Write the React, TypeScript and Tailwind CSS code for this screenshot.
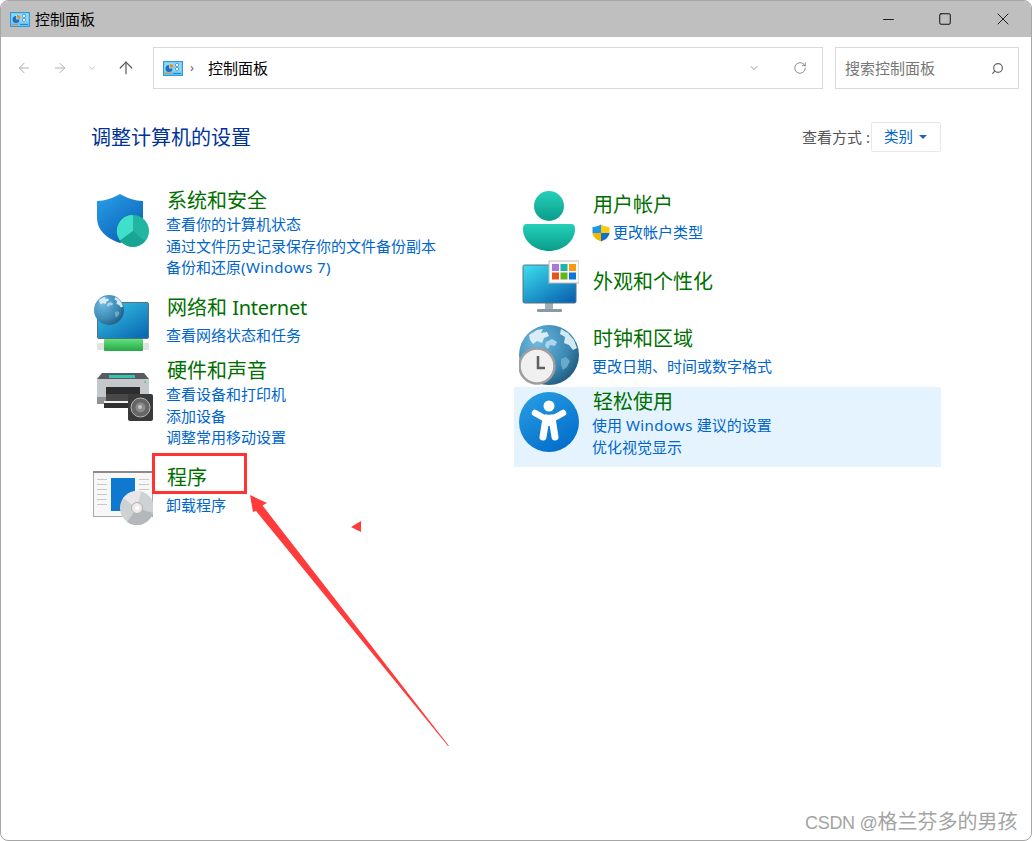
import type { ReactNode } from 'react'
import { ArrowLeft, ArrowRight, ArrowUp, ChevronDown, RotateCw, Search, X, Minus, Square } from 'lucide-react'

const FONT = "font-['Noto_Sans','Noto_Sans_CJK_SC',sans-serif]"

function CpIcon() {
  return (
    <svg width="20" height="15" viewBox="0 0 20 15">
      <rect x="0.5" y="0.5" width="19" height="14" fill="#6cc4ef" stroke="#2f9ad8" />
      <rect x="1.5" y="1.5" width="17" height="9" fill="#8ed6f6" />
      <path d="M6 4 A3.5 3.5 0 1 0 9.5 7.5 L6 7.5 Z" fill="#1f6fc0" />
      <path d="M7 3 A3.5 3.5 0 0 1 10.5 6.5 L7 6.5 Z" fill="#f08a1d" />
      <circle cx="14" cy="4" r="1.6" fill="#fff" stroke="#2a7fc4" strokeWidth="0.7" />
      <circle cx="14" cy="8" r="1.6" fill="#fff" stroke="#2a7fc4" strokeWidth="0.7" />
      <rect x="2" y="12" width="6" height="1" fill="#f08a1d" />
      <rect x="10" y="12" width="8" height="1" fill="#1f8ad0" />
    </svg>
  )
}

function ShieldIcon() {
  return (
    <svg width="60" height="60" viewBox="0 0 60 60">
      <defs>
        <linearGradient id="sh" x1="0" y1="0" x2="0.7" y2="1">
          <stop offset="0" stopColor="#2aa0e8" />
          <stop offset="1" stopColor="#0a62b8" />
        </linearGradient>
      </defs>
      <path d="M4 11 C12 11 20 8 27 4 C34 8 42 11 50 11 V28 C50 40 40 49 27 53 C14 49 4 40 4 28 Z" fill="url(#sh)" />
      <circle cx="40" cy="41" r="16" fill="#21b5a2" />
      <path d="M40 41 V25 A16 16 0 0 0 27 50.5 Z" fill="#3fe0cb" />
      <path d="M40 41 L27 50.5 A16 16 0 0 0 52 51 Z" fill="#18a593" />
    </svg>
  )
}

function Globe({ cx, cy, r, id }: { cx: number; cy: number; r: number; id: string }) {
  const k = r / 30
  return (
    <g transform={`translate(${cx} ${cy}) scale(${k})`}>
      <defs>
        <radialGradient id={id} cx="0.3" cy="0.3" r="0.95">
          <stop offset="0" stopColor="#6fb9de" />
          <stop offset="0.55" stopColor="#3a88b4" />
          <stop offset="1" stopColor="#123f5c" />
        </radialGradient>
      </defs>
      <circle r="30" fill={`url(#${id})`} />
      <path d="M-20 -20 L-12 -25 L-6 -26 L-8 -22 L-2 -23 L0 -19 L-5 -17 L-7 -12 L-12 -14 L-16 -11 L-19 -15 Z" fill="#d8edf6" />
      <path d="M-3 -13 L3 -16 L8 -13 L6 -9 L1 -10 L-1 -6 L-4 -9 Z" fill="#a9d6ea" />
      <path d="M12 -26 L19 -22 L25 -15 L28 -7 L24 -5 L20 -10 L15 -12 L16 -18 L11 -21 Z" fill="#d2e9f3" />
      <path d="M12 4 L17 2 L21 6 L18 12 L14 15 L12 10 Z" fill="#6ba9c8" />
    </g>
  )
}

function NetworkIcon() {
  return (
    <svg width="60" height="60" viewBox="0 0 60 60">
      <defs>
        <linearGradient id="ns" x1="0" y1="0" x2="0.8" y2="1">
          <stop offset="0" stopColor="#3cc8e8" />
          <stop offset="1" stopColor="#0a6cb4" />
        </linearGradient>
        <linearGradient id="nb" x1="0" y1="0" x2="0" y2="1">
          <stop offset="0" stopColor="#5fe37c" />
          <stop offset="1" stopColor="#27a646" />
        </linearGradient>
      </defs>
      <rect x="4" y="50" width="52" height="7" rx="1" fill="#e2e2e2" />
      <rect x="4.5" y="9.5" width="51" height="36" rx="1.5" fill="url(#ns)" stroke="#56707f" />
      <rect x="11" y="46" width="39" height="12" rx="1" fill="url(#nb)" />
      <Globe cx={16} cy={17} r={15} id="g1" />
    </svg>
  )
}

function PrinterIcon() {
  return (
    <svg width="60" height="60" viewBox="0 0 60 60">
      <path d="M4 12 L9 6 H51 L56 12 Z" fill="#555b60" />
      <rect x="16" y="8" width="26" height="3" fill="#35c4ae" />
      <rect x="4" y="12" width="52" height="22" fill="#c4c8cb" />
      <rect x="13" y="20" width="34" height="14" fill="#2d2d2d" />
      <rect x="13" y="27" width="34" height="7" fill="#484848" />
      <rect x="4" y="30" width="9" height="7" fill="#8f9396" />
      <rect x="11" y="34" width="26" height="2" fill="#f2f2f2" />
      <rect x="11" y="36" width="26" height="5" fill="#303030" />
      <circle cx="52" cy="15" r="1" fill="#3bd66a" />
      <rect x="35" y="27" width="25" height="27" rx="2" fill="#3b3a3a" />
      <circle cx="47.5" cy="40.5" r="9.5" fill="#666" stroke="#b5b5b5" />
      <circle cx="47.5" cy="40.5" r="5" fill="#8b8b8b" />
      <circle cx="47" cy="40" r="2" fill="#c5c5c5" />
    </svg>
  )
}

function ProgramIcon() {
  return (
    <svg width="60" height="60" viewBox="0 0 60 60">
      <rect x="0.5" y="4.5" width="59" height="45" fill="#f7f7f7" stroke="#a8a8a8" />
      <rect x="0" y="4" width="60" height="2" fill="#8a8a8a" />
      <g fill="#c9c9c9">
        <rect x="4" y="12" width="10" height="1" />
        <rect x="4" y="17" width="10" height="1" />
        <rect x="4" y="22" width="10" height="1" />
        <rect x="4" y="27" width="10" height="1" />
        <rect x="4" y="32" width="10" height="1" />
        <rect x="4" y="37" width="10" height="1" />
        <rect x="46" y="12" width="10" height="1" />
        <rect x="46" y="17" width="10" height="1" />
        <rect x="46" y="22" width="10" height="1" />
      </g>
      <rect x="18" y="11" width="24" height="33" fill="#0f78cf" />
      <circle cx="44" cy="41" r="17" fill="#cfd2d3" />
      <path d="M44 41 L30 31 A17 17 0 0 1 48 24.5 Z" fill="#e8e6ea" />
      <path d="M44 41 L60 46 A17 17 0 0 1 34 55 Z" fill="#b4b8ba" />
      <circle cx="44" cy="41" r="5.5" fill="#ececec" stroke="#b0b0b0" />
      <circle cx="44" cy="41" r="2" fill="#fff" />
    </svg>
  )
}

function UserIcon() {
  return (
    <svg width="60" height="60" viewBox="0 0 60 60">
      <defs>
        <linearGradient id="us" x1="0" y1="0" x2="0" y2="1">
          <stop offset="0" stopColor="#25d0b8" />
          <stop offset="1" stopColor="#0a9c8a" />
        </linearGradient>
      </defs>
      <circle cx="30" cy="15" r="15" fill="url(#us)" />
      <path d="M8 33 H52 C55 33 56 35 56 38 C56 51 43 60 30 60 C17 60 4 51 4 38 C4 35 5 33 8 33 Z" fill="url(#us)" />
    </svg>
  )
}

function MonitorIcon() {
  return (
    <svg width="60" height="60" viewBox="0 0 60 60">
      <defs>
        <linearGradient id="ms" x1="0" y1="0" x2="0.8" y2="1">
          <stop offset="0" stopColor="#3de0ee" />
          <stop offset="1" stopColor="#0a66b2" />
        </linearGradient>
      </defs>
      <rect x="26" y="46" width="8" height="6" fill="#9fb0b8" />
      <rect x="18" y="52" width="25" height="3" rx="1" fill="#8b9aa2" />
      <rect x="4" y="8" width="53" height="38" rx="1.5" fill="url(#ms)" stroke="#5a7380" />
      <rect x="30" y="4" width="30" height="22" fill="#fafafa" stroke="#bdbdbd" />
      <rect x="33" y="7" width="7" height="7" fill="#a877d8" />
      <rect x="41.5" y="7" width="7" height="7" fill="#1fb5a6" />
      <rect x="50" y="7" width="7" height="7" fill="#f59a12" />
      <rect x="33" y="15.5" width="7" height="7" fill="#e8521a" />
      <rect x="41.5" y="15.5" width="7" height="7" fill="#62b51c" />
      <rect x="50" y="15.5" width="7" height="7" fill="#0a78d4" />
    </svg>
  )
}

function ClockGlobeIcon() {
  return (
    <svg width="60" height="60" viewBox="0 0 60 60">
      <Globe cx={30} cy={30} r={30} id="g2" />
      <circle cx="18" cy="41" r="17.5" fill="#f0f0f0" stroke="#9e9e9e" strokeWidth="2.5" />
      <path d="M19 31 V43 H26" fill="none" stroke="#5f5f5f" strokeWidth="2.5" />
    </svg>
  )
}

function AccessIcon() {
  return (
    <svg width="60" height="60" viewBox="0 0 60 60">
      <defs>
        <linearGradient id="ac" x1="0" y1="0" x2="0.6" y2="1">
          <stop offset="0" stopColor="#2aa0e4" />
          <stop offset="1" stopColor="#0470cc" />
        </linearGradient>
      </defs>
      <circle cx="30" cy="30" r="30" fill="url(#ac)" />
      <circle cx="30" cy="14" r="5.5" fill="#fff" />
      <path d="M16 21 L25 26 H35 L44 21" fill="none" stroke="#fff" strokeWidth="6.5" strokeLinecap="round" strokeLinejoin="round" />
      <path d="M27 26 L24 45 M33 26 L36 45" fill="none" stroke="#fff" strokeWidth="7" strokeLinecap="round" />
      <rect x="25" y="24" width="10" height="10" fill="#fff" />
    </svg>
  )
}

function UacShield() {
  return (
    <svg width="18" height="18" viewBox="0 0 18 18" className="shrink-0">
      <path d="M9 0.5 C6.5 2 3.5 3 0.5 3 V9 H9 Z" fill="#1f96e6" />
      <path d="M9 0.5 C11.5 2 14.5 3 17.5 3 V9 H9 Z" fill="#fcca0f" />
      <path d="M0.5 9 C1 13 4.5 16 9 17.5 V9 Z" fill="#f5b800" />
      <path d="M17.5 9 C17 13 13.5 16 9 17.5 V9 Z" fill="#1272c8" />
    </svg>
  )
}

type RowProps = {
  title: ReactNode
  icon: ReactNode
  iconClass: string
  height: string
  linkGap?: string
  links?: ReactNode[]
}

function Row({ title, icon, iconClass, height, linkGap = '', links = [] }: RowProps) {
  return (
    <div className={`flex items-start ${height}`}>
      <div className={`w-[73px] shrink-0 ${iconClass}`}>{icon}</div>
      <div className="flex flex-col">
        <div className="pl-px pt-px text-[20px] leading-[28px] text-[#006f00]">{title}</div>
        <div className={`flex flex-col ${linkGap}`}>
          {links.map((l, i) => (
            <div key={i} className="flex items-center whitespace-pre text-[15px] leading-[21.5px] text-[#0066cc]">{l}</div>
          ))}
        </div>
      </div>
    </div>
  )
}

export default function App() {
  return (
    <div className={`relative h-[841px] w-[1032px] overflow-hidden bg-white ${FONT}`}>
      <div className="flex h-full flex-col overflow-hidden rounded-lg border border-[#a6a6a6] bg-white">
        {/* title bar */}
        <div className="flex h-[36px] shrink-0 items-center bg-[#bfbfbf] pl-[9px] pr-[18px]">
          <CpIcon />
          <span className="ml-[5px] text-[15px] text-black">控制面板</span>
          <div className="ml-auto flex items-center gap-[41px] text-[#111]">
            <Minus size={17} strokeWidth={1.3} />
            <Square size={14} strokeWidth={1.7} />
            <X size={20} strokeWidth={1.1} />
          </div>
        </div>

        {/* address bar */}
        <div className="mt-[10px] flex h-[42px] shrink-0 items-center pl-[15px] pr-[12px]">
          <ArrowLeft size={16} strokeWidth={1.3} className="text-[#a3a3a3]" />
          <ArrowRight size={16} strokeWidth={1.3} className="ml-[20px] text-[#a3a3a3]" />
          <ChevronDown size={10} strokeWidth={1.5} className="ml-[19px] text-[#a3a3a3]" />
          <ArrowUp size={20} strokeWidth={1.4} className="ml-[19px] text-[#555]" />
          <div className="ml-[17px] flex h-full w-[670px] items-center border border-[#d9d9d9] pl-[9px] pr-[15px]">
            <CpIcon />
            <span className="ml-[7px] text-[13px] text-[#666]">›</span>
            <span className="ml-[14px] text-[15px] text-black">控制面板</span>
            <ChevronDown size={12} strokeWidth={1.3} className="ml-auto text-[#666]" />
            <RotateCw size={14} strokeWidth={1.4} className="ml-[33px] text-[#777]" />
          </div>
          <div className="ml-[12px] flex h-full w-[184px] items-center justify-between border border-[#d9d9d9] pl-[9px] pr-[14px]">
            <span className="text-[15px] text-[#767676]">搜索控制面板</span>
            <Search size={13} strokeWidth={2.2} className="-scale-x-100 text-[#666]" />
          </div>
        </div>

        {/* header */}
        <div className="mt-[33px] flex h-[30px] shrink-0 items-center justify-between pl-[90px] pr-[90px]">
          <h1 className="pt-[2px] text-[20px] font-normal text-[#003399]">调整计算机的设置</h1>
          <div className="flex items-center">
            <span className="text-[15px] text-[#555]">查看方式<span className="pl-[4px]">:</span></span>
            <div className="ml-px flex h-[30px] w-[70px] items-center rounded-[2px] border border-[#e3e8ef] pl-[12px]">
              <span className="text-[14.5px] text-[#0066cc]">类别</span>
              <span className="ml-[6px] h-0 w-0 border-x-[4px] border-t-[4px] border-x-transparent border-t-[#1a66b0]" />
            </div>
          </div>
        </div>

        {/* categories */}
        <div className="mt-[34px] flex pl-[92px]">
          <div className="flex w-[421px] shrink-0 flex-col">
            <Row
              title="系统和安全"
              height="h-[107px]"
              iconClass="mt-[4px]"
              linkGap="-mt-[1px]"
              icon={<ShieldIcon />}
              links={[
                '查看你的计算机状态',
                '通过文件历史记录保存你的文件备份副本',
                <>备份和还原<span className="tracking-[0.4px]">(Windows 7)</span></>,
              ]}
            />
            <Row
              title={<>网络和 <span className="tracking-[-0.25px]">Internet</span></>}
              height="h-[63px]"
              iconClass=""
              linkGap="mt-[3px]"
              icon={<NetworkIcon />}
              links={['查看网络状态和任务']}
            />
            <Row
              title="硬件和声音"
              height="h-[107px]"
              iconClass="mt-[11px]"
              linkGap="-mt-[1px]"
              icon={<PrinterIcon />}
              links={['查看设备和打印机', '添加设备', '调整常用移动设置']}
            />
            <Row
              title="程序"
              height="h-[80px]"
              iconClass="mt-[4px]"
              linkGap="mt-[3px]"
              icon={<ProgramIcon />}
              links={['卸载程序']}
            />
          </div>
          <div className="flex w-[427px] shrink-0 flex-col pt-[4px]">
            <div className="pl-[5px]">
              <Row
                title="用户帐户"
                height="h-[77px]"
                iconClass="mt-[1px]"
                linkGap="mt-[3px]"
                icon={<UserIcon />}
                links={[
                  <>
                    <UacShield />
                    <span className="ml-[3px]">更改帐户类型</span>
                  </>,
                ]}
              />
              <Row title="外观和个性化" height="h-[57px]" iconClass="-mt-[10px]" icon={<MonitorIcon />} />
              <Row
                title="时钟和区域"
                height="h-[63px]"
                iconClass="mt-[1px]"
                linkGap="mt-[3px]"
                icon={<ClockGlobeIcon />}
                links={['更改日期、时间或数字格式']}
              />
            </div>
            <div className="bg-[#e5f3ff] pl-[5px]">
              <Row
                title="轻松使用"
                height="h-[80px]"
                iconClass="mt-[5px]"
                linkGap="-mt-[1px]"
                icon={<AccessIcon />}
                links={[
                  <>使用 <span className="tracking-[0.4px]">Windows</span> 建议的设置</>,
                  '优化视觉显示',
                ]}
              />
            </div>
          </div>
        </div>
      </div>

      {/* annotations drawn on top of the screenshot */}
      <div className="absolute left-[152px] top-[453px] h-[41px] w-[95px] border-[3px] border-[#ff3333]" />
      <svg className="absolute left-0 top-0" width="1032" height="841" viewBox="0 0 1032 841">
        <path d="M250 495 L267 503 L262.5 505.5 L449 746 L448 746 L256 511 L253 512 Z" fill="#ff3b3b" />
        <path d="M351 527 L361 521 V532 Z" fill="#ff3b3b" />
      </svg>
      <div className="absolute left-[805px] top-[808px] text-[20px] leading-[28px] text-[#a3a3a3]">
        <span className="font-['Liberation_Sans','Noto_Sans_CJK_SC',sans-serif]">
          <span className="text-[18px] tracking-[-0.3px]">CSDN @</span>格兰芬多的男孩
        </span>
      </div>
    </div>
  )
}
